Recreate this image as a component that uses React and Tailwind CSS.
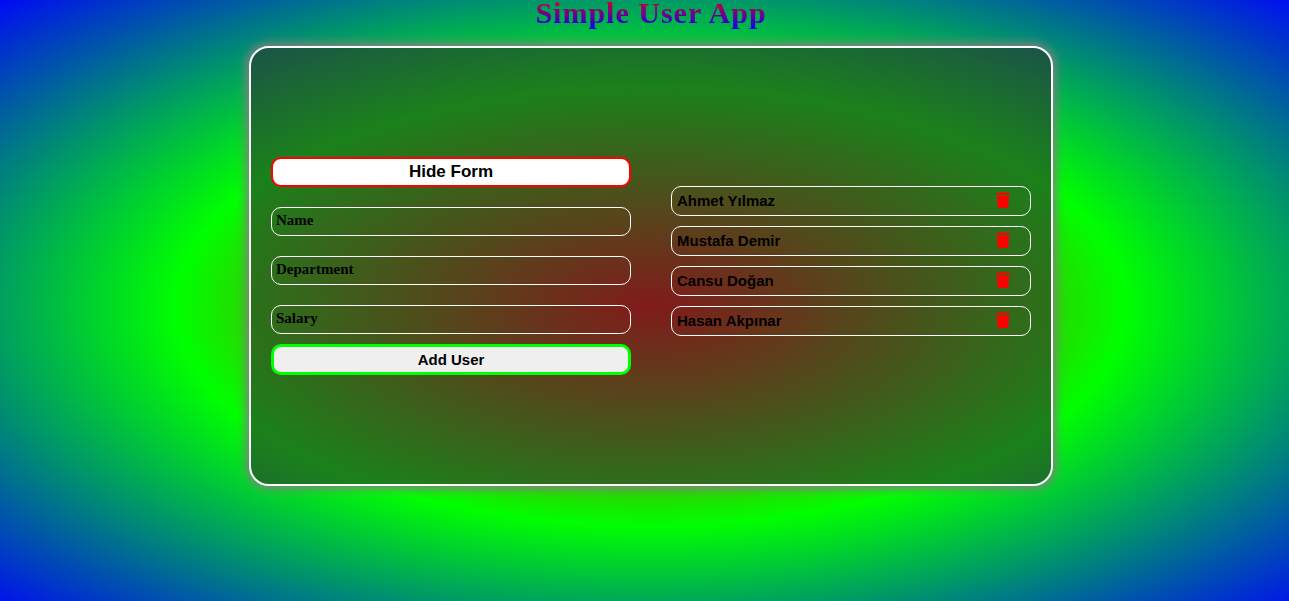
import { useState } from "react";

const initialUsers = [
  { id: 1, name: "Ahmet Yılmaz" },
  { id: 2, name: "Mustafa Demir" },
  { id: 3, name: "Cansu Doğan" },
  { id: 4, name: "Hasan Akpınar" },
];

const fields = [
  { id: "name", label: "Name" },
  { id: "department", label: "Department" },
  { id: "salary", label: "Salary" },
];

function TrashIcon() {
  return (
    <svg viewBox="0 0 14 16" className="block h-4 w-3.5" fill="#ff0000" aria-hidden="true">
      <path d="M0.4 1H4L4.6 0.3Q4.8 0 5.2 0H8.8Q9.2 0 9.4 0.3L10 1H13.6Q14 1 14 1.4V2.6Q14 3 13.6 3H0.4Q0 3 0 2.6V1.4Q0 1 0.4 1Z" />
      <path d="M1 4H13L12.4 14.6Q12.3 16 10.9 16H3.1Q1.7 16 1.6 14.6Z" />
    </svg>
  );
}

function UserForm({ onAdd }) {
  const submit = (event) => {
    event.preventDefault();
    const name = new FormData(event.currentTarget).get("name");
    if (name) onAdd(name);
    event.currentTarget.reset();
  };

  return (
    <form className="mt-5 flex flex-col" onSubmit={submit}>
      <div className="flex flex-col gap-5">
        {fields.map((field) => (
          <input
            key={field.id}
            id={field.id}
            name={field.id}
            aria-label={field.label}
            placeholder={field.label}
            className="h-[29px] w-full rounded-[10px] border border-white bg-transparent px-1 pb-0.5 font-['Liberation_Serif',serif] text-[15px] font-bold text-black placeholder:text-black placeholder:opacity-100"
          />
        ))}
      </div>
      <button
        type="submit"
        className="mt-2.5 h-[31px] rounded-[10px] border-3 border-[#00ff00] bg-[#efefef] text-[15px] leading-5 font-bold text-black"
      >
        Add User
      </button>
    </form>
  );
}

function UserRow({ user, onDelete }) {
  return (
    <li className="flex h-[30px] items-center justify-between rounded-[10px] border border-white pr-5 pl-[5px] text-[15px] font-bold text-black">
      <span>{user.name}</span>
      <button type="button" className="pb-0.5" aria-label={`Delete ${user.name}`} onClick={() => onDelete(user.id)}>
        <TrashIcon />
      </button>
    </li>
  );
}

export default function App() {
  const [users, setUsers] = useState(initialUsers);
  const [open, setOpen] = useState(true);

  return (
    <div className="flex min-h-screen flex-col items-center bg-[radial-gradient(73.5%_73%_at_50.5%_51%,#ff0000,#00ff00,#0000ff)] pl-[13px] font-['Liberation_Sans',Arial,sans-serif]">
      <h1 className="bg-[linear-gradient(#ff0000_-6px,#0000ff)] bg-clip-text pb-1 font-['Liberation_Serif',serif] text-[30px] leading-[26px] font-bold tracking-[1px] text-transparent">
        Simple User App
      </h1>
      <main className="mt-4 grid min-h-[440px] w-full max-w-[804px] grid-cols-2 items-center gap-10 rounded-[20px] border-2 border-white bg-[#2d2d2d]/60 px-5 shadow-[0_0_10px_3px_#808080]">
        <section className="flex flex-col">
          <button
            type="button"
            onClick={() => setOpen(!open)}
            className="h-[30px] rounded-[10px] border-2 border-[#ff0000] bg-white text-[17px] leading-5 font-bold text-black"
          >
            {open ? "Hide Form" : "Show Form"}
          </button>
          {open && <UserForm onAdd={(name) => setUsers([...users, { id: Date.now(), name }])} />}
        </section>
        <ul className="flex flex-col gap-2.5 pb-2.5">
          {users.map((user) => (
            <UserRow key={user.id} user={user} onDelete={(id) => setUsers(users.filter((u) => u.id !== id))} />
          ))}
        </ul>
      </main>
    </div>
  );
}
